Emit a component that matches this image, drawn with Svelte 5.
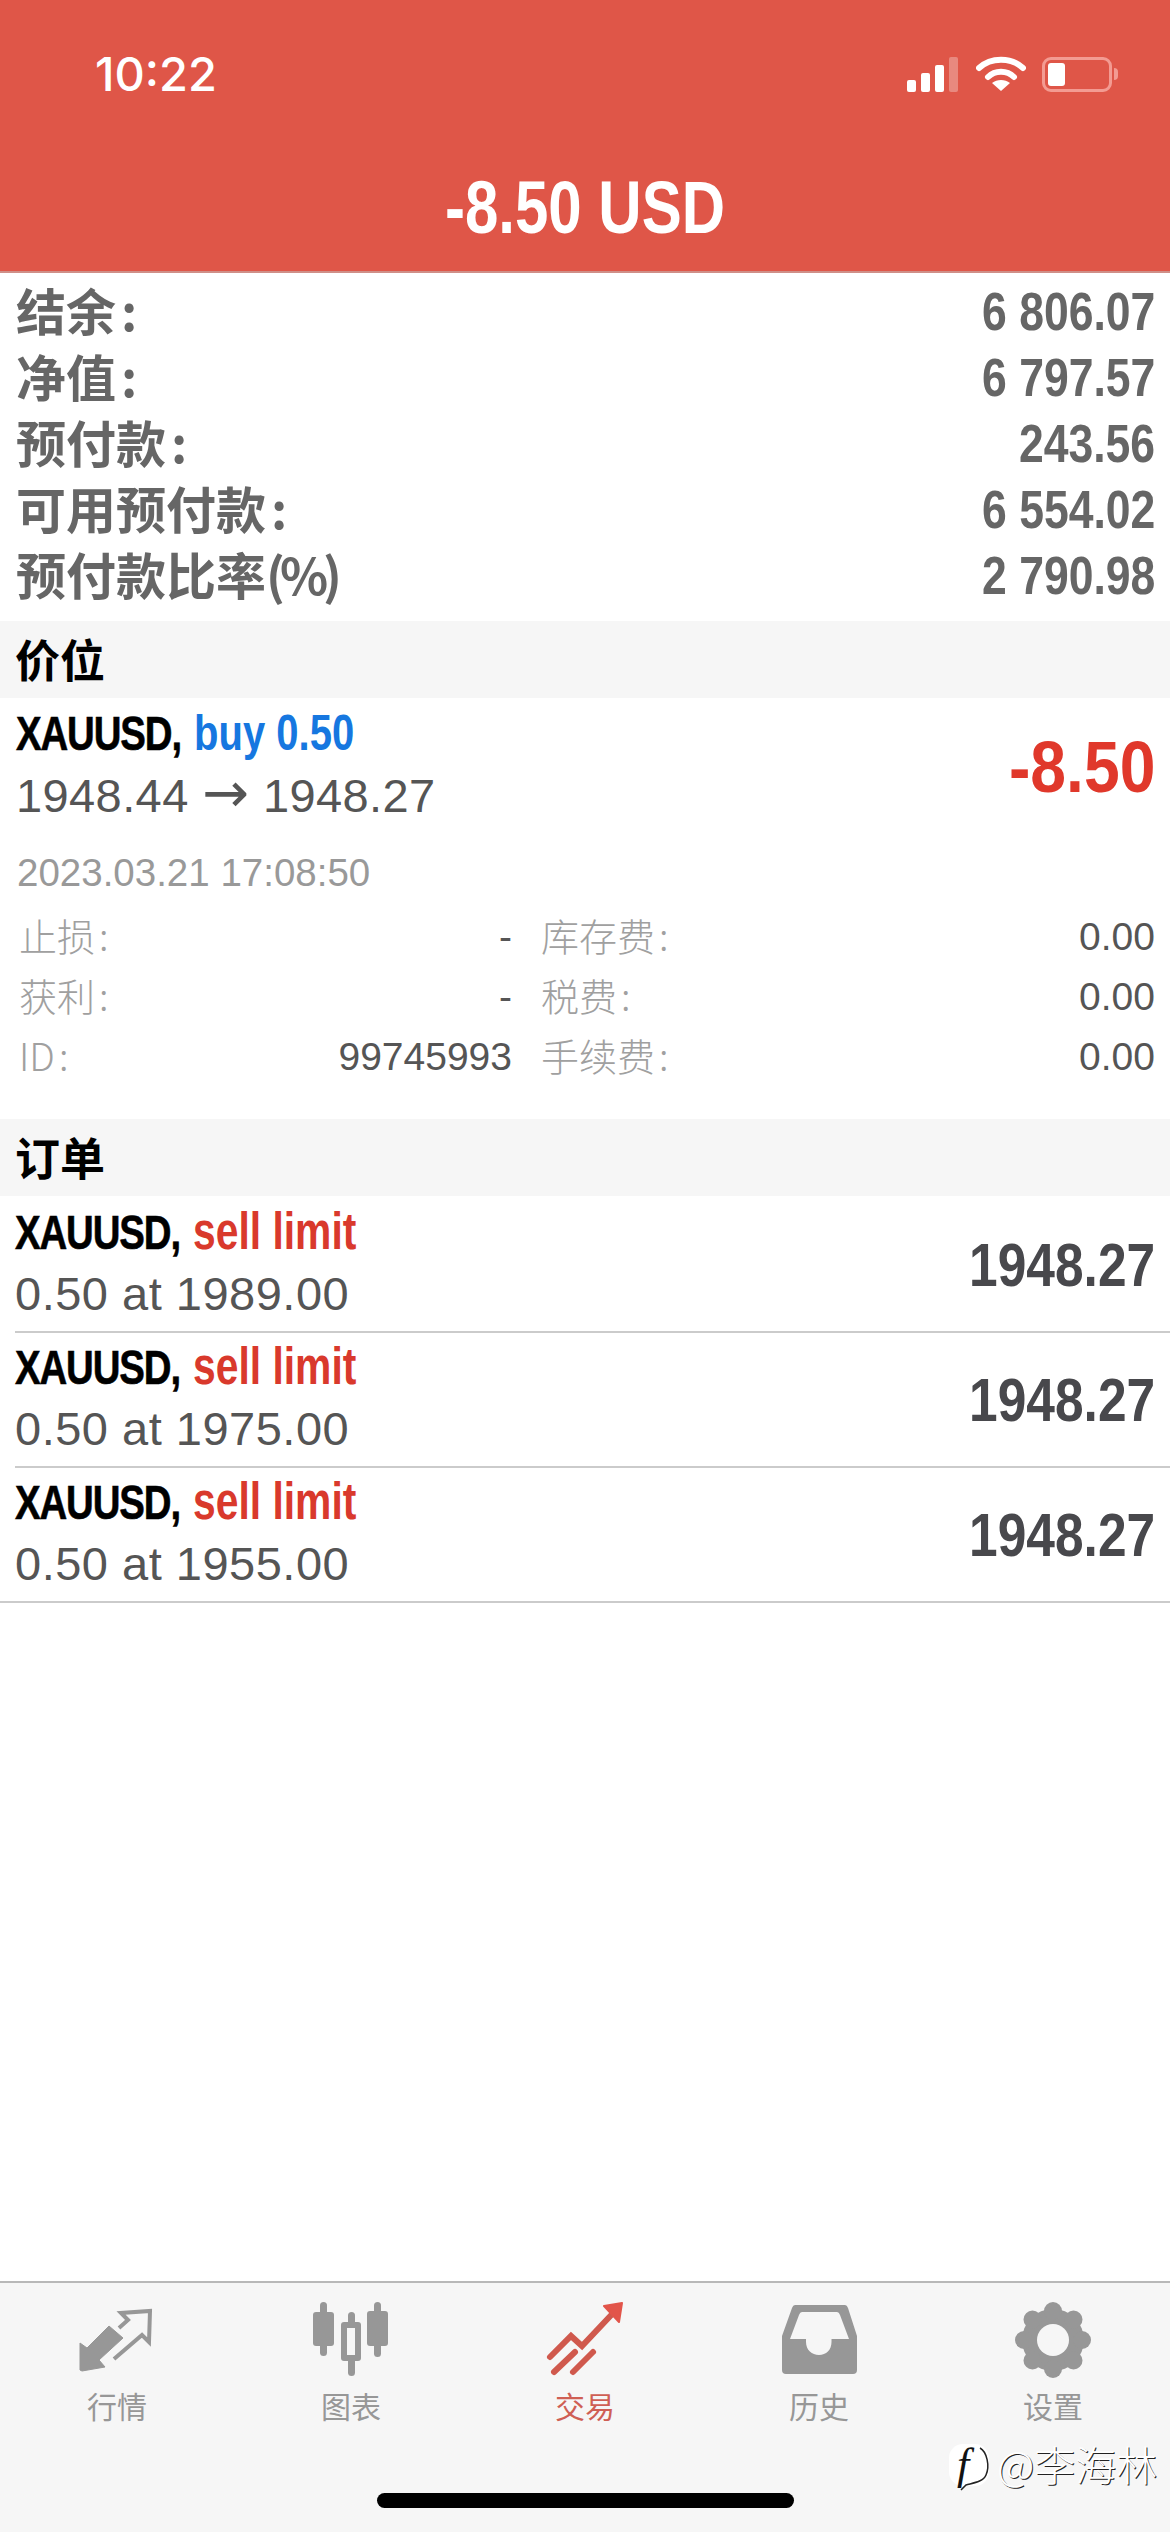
<script>
  const summary = [
    ['结余', ':', '6 806.07'],
    ['净值', ':', '6 797.57'],
    ['预付款', ':', '243.56'],
    ['可用预付款', ':', '6 554.02'],
    ['预付款比率', '(%)', '2 790.98']
  ];
  const details = [
    ['止损', '-', '库存费', '0.00'],
    ['获利', '-', '税费', '0.00'],
    ['ID', '99745993', '手续费', '0.00']
  ];
  const orders = ['1989.00', '1975.00', '1955.00'];
  const teeth = [0, 45, 90, 135, 180, 225, 270, 315];
</script>

<div class="page">
  <header class="top">
    <div class="status">
      <span class="time">10:22</span>
      <div class="status-icons">
        <svg class="signal" width="52" height="36" viewBox="0 0 52 36">
          <rect x="0" y="24" width="9" height="12" rx="2" fill="#fff" />
          <rect x="14" y="17" width="9" height="19" rx="2" fill="#fff" />
          <rect x="28" y="9" width="9" height="27" rx="2" fill="#fff" />
          <rect x="42" y="1" width="9" height="35" rx="2" fill="#fff" opacity=".3" />
        </svg>
        <svg class="wifi" width="50" height="36" viewBox="0 0 50 36">
          <path d="M3 12 C15 1 35 1 47 12" fill="none" stroke="#fff" stroke-width="6" stroke-linecap="round" />
          <path d="M12 21 C19 14 31 14 38 21" fill="none" stroke="#fff" stroke-width="6" stroke-linecap="round" />
          <path d="M25 35 L16 27 C21 23 29 23 34 27 Z" fill="#fff" />
        </svg>
        <div class="battery"><div class="battery-level"></div></div>
        <div class="battery-cap"></div>
      </div>
    </div>
    <div class="profit">-8.50 USD</div>
  </header>

  <main class="content">
    <section class="summary">
      {#each summary as [label, suffix, value]}
        <div class="summary-row">
          <span class="summary-label">{label}<span class:colon={suffix === ':'} class:pct={suffix !== ':'}>{suffix}</span></span>
          <span class="summary-value">{value}</span>
        </div>
      {/each}
    </section>

    <h2 class="band">价位</h2>

    <section class="position">
      <div class="pos-head">
        <div>
          <div class="title"><b>XAUUSD,</b> <span class="blue">buy 0.50</span></div>
          <div class="sub pos-sub">1948.44 <span class="arrow">→</span> 1948.27</div>
        </div>
        <div class="pnl">-8.50</div>
      </div>
      <div class="date">2023.03.21 17:08:50</div>
      <div class="details">
        {#each details as [a, b, c, d]}
          <div class="detail-row">
            <div class="cell"><span class="k">{a}<span class="k-colon">:</span></span><span class="v">{b}</span></div>
            <div class="cell"><span class="k">{c}<span class="k-colon">:</span></span><span class="v">{d}</span></div>
          </div>
        {/each}
      </div>
    </section>

    <h2 class="band">订单</h2>

    <section class="orders">
      {#each orders as price, i}
        <div class="order" class:last={i === orders.length - 1}>
          <div>
            <div class="title"><b>XAUUSD,</b> <span class="red">sell limit</span></div>
            <div class="sub order-sub">0.50 at {price}</div>
          </div>
          <div class="current">1948.27</div>
        </div>
      {/each}
    </section>
  </main>

  <nav class="tabs">
    <div class="tab">
      <svg width="100" height="78" viewBox="0 0 100 78">
        <path d="M13 70 L13 43 L20 48 L42 26 L56 38 L32 60 L38 67 L15 71 Z" fill="#979797" stroke="#979797" stroke-width="1" stroke-linejoin="round" />
        <path d="M47 59 L75 35 L82 42 L83 11 L54 13 L61 20 L52 28" fill="none" stroke="#979797" stroke-width="4" />
      </svg>
      <span>行情</span>
    </div>
    <div class="tab">
      <svg width="100" height="78" viewBox="0 0 100 78">
        <g fill="#979797">
          <rect x="12" y="12" width="21" height="34" rx="3" />
          <rect x="19" y="2" width="7" height="54" rx="3.5" />
          <rect x="66" y="11" width="21" height="35" rx="3" />
          <rect x="73" y="2" width="7" height="55" rx="3.5" />
          <rect x="47" y="12" width="7" height="64" rx="3.5" />
          <path d="M43 22 H57 Q60 22 60 25 V58 Q60 61 57 61 H43 Q40 61 40 58 V25 Q40 22 43 22 Z" />
        </g>
        <rect x="46" y="28" width="8" height="27" fill="#f6f6f6" />
      </svg>
      <span>图表</span>
    </div>
    <div class="tab active">
      <svg width="100" height="78" viewBox="0 0 100 78">
        <g fill="none" stroke="#d0594d" stroke-width="6" stroke-linecap="round" stroke-linejoin="miter">
          <path d="M15 57 L36 36 L47 46 L80 11" />
          <path d="M19 72 L40 52" />
          <path d="M38 72 L58 52" />
        </g>
        <path d="M87 3 L69 6 L84 22 Z" fill="#e2554a" stroke="#e2554a" stroke-width="2" stroke-linejoin="round" />
      </svg>
      <span>交易</span>
    </div>
    <div class="tab">
      <svg width="100" height="78" viewBox="0 0 100 78">
        <path fill="#979797" fill-rule="evenodd" d="M26 5 H76 Q78 5 79 8 L88 36 V70 Q88 74 84 74 H17 Q13 74 13 70 V36 L23 8 Q24 5 26 5 Z M33 12 Q31 12 30 15 L21 39 H37 V42 C37 50 43 55 50 55 C57 55 62.5 50 62.5 42 V39 H80 L71 15 Q70 12 68 12 Z" />
      </svg>
      <span>历史</span>
    </div>
    <div class="tab">
      <svg width="100" height="78" viewBox="0 0 100 78">
        <g fill="#979797">
          <circle cx="50" cy="40" r="31" />
          {#each teeth as t}
            <circle cx="50" cy="11" r="9" transform="rotate({t} 50 40)" />
          {/each}
        </g>
        <circle cx="50" cy="40" r="16" fill="#f6f6f6" />
      </svg>
      <span>设置</span>
    </div>
  </nav>

  <div class="watermark">
    <div class="wm-logo">
      <svg width="44" height="50" viewBox="0 0 44 50">
        <rect x="0" y="0" width="40" height="42" rx="14" fill="#fff" />
        <path d="M31 4 C38 8 41 22 37 31 C34 38 24 39 17 41 L12 46" fill="none" stroke="#222" stroke-width="1.5" />
      </svg>
      <span class="wm-f">f</span>
    </div>
    <span class="wm-text">@李海林</span>
  </div>
  <div class="home"></div>
</div>

<style>
  :global(body) {
    margin: 0;
    background: #fff;
  }
  .page {
    position: relative;
    width: 1170px;
    height: 2532px;
    display: flex;
    flex-direction: column;
    overflow: hidden;
    font-family: "Liberation Sans", "Noto Sans CJK SC", sans-serif;
    background: #fff;
  }
  .top {
    height: 271px;
    flex: none;
    background: #df5648;
    color: #fff;
    border-bottom: 2px solid #cf8f88;
    box-sizing: content-box;
  }
  .status {
    height: 156px;
    padding: 51px 52px 0 95px;
    box-sizing: border-box;
    display: flex;
    justify-content: space-between;
    align-items: flex-start;
  }
  .time {
    font-family: Inter, sans-serif;
    font-weight: 500;
    font-size: 47px;
    line-height: 46px;
  }
  .status-icons {
    display: flex;
    align-items: center;
    padding-top: 5px;
  }
  .wifi {
    margin-left: 17px;
  }
  .battery {
    margin-left: 16px;
    width: 70px;
    height: 35px;
    box-sizing: border-box;
    border: 3px solid #f39b92;
    border-radius: 9px;
    padding: 3px;
  }
  .battery-level {
    width: 17px;
    height: 23px;
    background: #fff;
    border-radius: 3px;
  }
  .battery-cap {
    margin-left: 2px;
    width: 4px;
    height: 12px;
    background: #f39b92;
    border-radius: 0 6px 6px 0;
  }
  .profit {
    font-weight: 700;
    font-size: 75px;
    line-height: 73px;
    text-align: center;
    margin-top: 15px;
    transform: scaleX(0.8);
  }
  .content {
    flex: 1;
  }
  .summary {
    padding: 6px 15px 12px 16px;
  }
  .summary-row {
    height: 66px;
    display: flex;
    justify-content: space-between;
    align-items: center;
    font-weight: 700;
    color: #666;
  }
  .summary-label {
    font-size: 50px;
    line-height: 66px;
    margin-top: -6px;
    font-family: "Noto Sans CJK SC", sans-serif;
  }
  .colon {
    margin-left: 5px;
  }
  .pct {
    letter-spacing: -5px;
  }
  .summary-value {
    display: inline-block;
    font-size: 53px;
    line-height: 66px;
    transform: scaleX(0.84);
    transform-origin: right center;
  }
  .band {
    margin: 0;
    height: 77px;
    background: #f6f6f6;
    padding-left: 15px;
    font-size: 45px;
    line-height: 76px;
    font-weight: 700;
    color: #000;
    font-family: "Noto Sans CJK SC", sans-serif;
  }
  .position {
    height: 421px;
    padding: 7px 15px 0 16px;
    box-sizing: border-box;
  }
  .pos-head {
    display: flex;
    justify-content: space-between;
    align-items: center;
  }
  .title {
    width: max-content;
    font-weight: 700;
    font-size: 48px;
    line-height: 56px;
    color: #000;
    transform: scaleX(0.8);
    transform-origin: left center;
  }
  .title b {
    letter-spacing: -1.4px;
    -webkit-text-stroke: 0.6px #000;
  }
  .blue {
    color: #1677e0;
    font-size: 50px;
    margin-left: 3px;
  }
  .red {
    color: #d9392c;
    font-size: 51px;
    margin-left: 3px;
  }
  .sub {
    font-size: 47px;
    line-height: 56px;
    color: #555;
  }
  .pos-sub {
    margin-top: 6px;
    letter-spacing: 0.4px;
  }
  .order-sub {
    letter-spacing: 0.5px;
    margin-top: 5px;
  }
  .arrow {
    font-family: "DejaVu Sans", sans-serif;
    font-size: 56px;
    line-height: 40px;
  }
  .pnl {
    font-weight: 700;
    font-size: 73px;
    line-height: 70px;
    color: #e0382b;
    margin-top: 5px;
    transform: scaleX(0.88);
    transform-origin: right center;
  }
  .date {
    margin-top: 27px;
    margin-left: 1px;
    font-size: 38.5px;
    line-height: 44px;
    color: #999;
  }
  .details {
    margin-top: 10px;
  }
  .detail-row {
    height: 60px;
    display: grid;
    grid-template-columns: 496px 1fr;
    column-gap: 29px;
    align-items: center;
    font-size: 38px;
    line-height: 44px;
  }
  .cell {
    display: flex;
    justify-content: space-between;
    align-items: center;
  }
  .cell:first-child {
    padding-left: 3px;
  }
  .k {
    color: #a0a0a0;
    font-family: "Noto Sans CJK SC", sans-serif;
    font-weight: 300;
    font-size: 38px;
  }
  .k-colon {
    margin-left: 4px;
  }
  .v {
    color: #555;
    font-size: 39px;
    margin-top: 4px;
  }
  .orders {
    padding-top: 2px;
    padding-left: 15px;
  }
  .order {
    height: 135px;
    box-sizing: border-box;
    padding: 0 15px 3px 0;
    display: flex;
    justify-content: space-between;
    align-items: center;
    border-bottom: 2px solid #cbcbcb;
  }
  .order.last {
    margin-left: -15px;
    padding-left: 15px;
  }
  .current {
    font-weight: 700;
    font-size: 62px;
    line-height: 62px;
    color: #48484c;
    margin-top: 4px;
    transform: scaleX(0.83);
    transform-origin: right center;
  }
  .tabs {
    flex: none;
    height: 251px;
    box-sizing: border-box;
    background: #f6f6f6;
    border-top: 2px solid #b8b8b8;
    display: grid;
    grid-template-columns: repeat(5, 1fr);
    padding-top: 17px;
  }
  .tab {
    display: flex;
    flex-direction: column;
    align-items: center;
    color: #979797;
    font-family: "Noto Sans CJK SC", sans-serif;
    font-size: 30px;
    line-height: 36px;
  }
  .tab span {
    margin-top: 9px;
  }
  .tab.active {
    color: #cf5f54;
  }
  .watermark {
    position: absolute;
    left: 949px;
    top: 2437px;
    display: flex;
    align-items: center;
    height: 52px;
  }
  .wm-logo {
    position: relative;
    width: 44px;
    height: 50px;
    margin-top: 12px;
    margin-right: 4px;
  }
  .wm-f {
    position: absolute;
    left: 8px;
    top: -4px;
    color: #111;
    font-family: "Liberation Serif", serif;
    font-style: italic;
    font-size: 44px;
    line-height: 50px;
  }
  .wm-text {
    font-family: "Noto Sans CJK SC", sans-serif;
    font-weight: 300;
    font-size: 41px;
    line-height: 52px;
    color: #fff;
    text-shadow: 1px 1px 0 #222;
    white-space: nowrap;
  }
  .home {
    position: absolute;
    left: 377px;
    top: 2493px;
    width: 417px;
    height: 15px;
    border-radius: 8px;
    background: #000;
  }
</style>
